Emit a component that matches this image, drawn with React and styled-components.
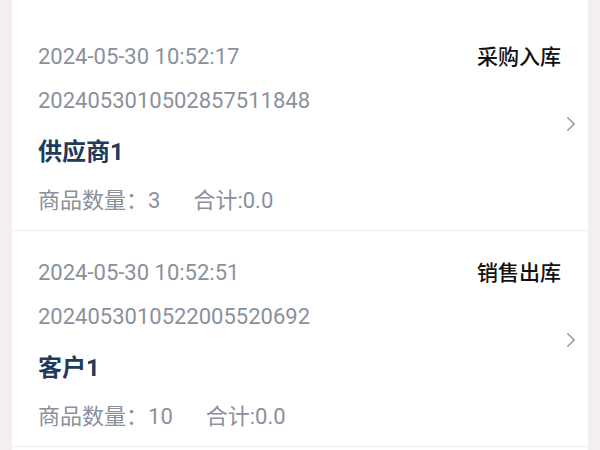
import React from "react";
import styled, { createGlobalStyle } from "styled-components";

const Global = createGlobalStyle`
  html, body { margin: 0; padding: 0; background: #f4eeee; }
  body { font-family: Roboto, "Noto Sans CJK SC", sans-serif; }
`;

const Page = styled.div`
  padding: 0 12px;
  height: 450px;
  overflow: hidden;
  box-sizing: border-box;
  display: flex;
  flex-direction: column;
`;

const Card = styled.div`
  flex: 1;
  background: #ffffff;
  padding-top: 15px;
`;

const Item = styled.div`
  display: flex;
  align-items: center;
  gap: 5px;
  padding: 0 12px 0 26px;
  border-bottom: 1px solid #ebedf0;
`;

const Body = styled.div`
  flex: 1;
  min-width: 0;
  display: flex;
  flex-direction: column;
  padding: 25px 0 13px;
`;

const TopRow = styled.div`
  display: flex;
  justify-content: space-between;
  align-items: baseline;
  line-height: 33px;
`;

const Time = styled.span`
  font-size: 22px;
  color: #8a919c;
`;

const Type = styled.span`
  font-size: 21px;
  font-weight: 500;
  color: #111111;
`;

const Code = styled.div`
  margin-top: 10px;
  font-size: 22px;
  line-height: 33px;
  color: #8a919c;
`;

const Name = styled.div`
  margin-top: 17px;
  font-size: 24px;
  line-height: 36px;
  font-weight: 700;
  color: #1f3a5a;
`;

const Meta = styled.div`
  margin-top: 14px;
  font-size: 22px;
  line-height: 33px;
  color: #8a919c;
  display: flex;
`;

const Total = styled.span`
  margin-left: 33px;
`;

const Arrow = () => (
  <svg width="10" height="16" viewBox="0 0 10 16" fill="none">
    <path d="M1.8 1.8 L8.2 8 L1.8 14.2" stroke="#8f939a" strokeWidth="1.4" strokeLinecap="round" strokeLinejoin="round" />
  </svg>
);

const ArrowBox = styled.div`
  display: flex;
  align-items: center;
  width: 10px;
  padding-top: 2px;
`;

const data = [
  { time: "2024-05-30 10:52:17", type: "采购入库", code: "2024053010502857511848", name: "供应商1", count: 3, total: "0.0" },
  { time: "2024-05-30 10:52:51", type: "销售出库", code: "2024053010522005520692", name: "客户1", count: 10, total: "0.0" },
];

export default function App() {
  return (
    <>
      <Global />
      <Page>
        <Card>
          {data.map((d) => (
            <Item key={d.code}>
              <Body>
                <TopRow>
                  <Time>{d.time}</Time>
                  <Type>{d.type}</Type>
                </TopRow>
                <Code>{d.code}</Code>
                <Name>{d.name}</Name>
                <Meta>
                  <span>商品数量：{d.count}</span>
                  <Total>合计:{d.total}</Total>
                </Meta>
              </Body>
              <ArrowBox>
                <Arrow />
              </ArrowBox>
            </Item>
          ))}
        </Card>
      </Page>
    </>
  );
}
